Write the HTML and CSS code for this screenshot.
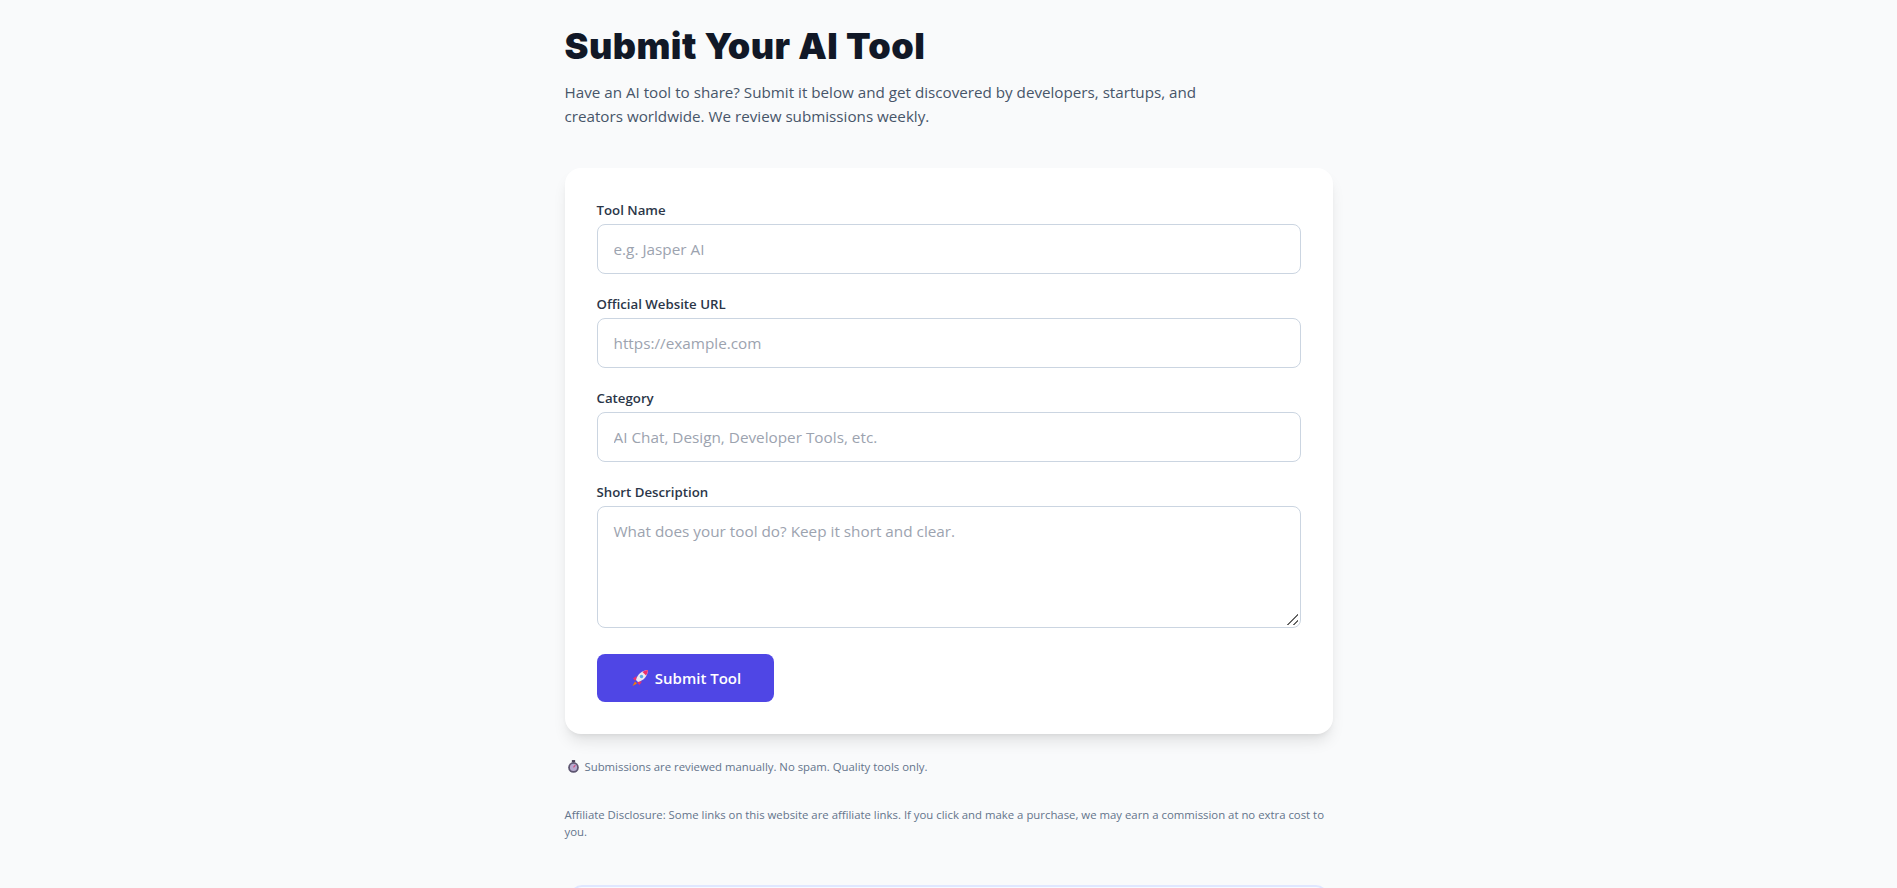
FILE: index.html
```html
<!DOCTYPE html>
<html lang="en">
<head>
<meta charset="utf-8">
<title>Submit Your AI Tool</title>
<link rel="stylesheet" href="styles.css">
</head>
<body>
<main class="page">
  <h1 class="title">Submit Your AI Tool</h1>
  <p class="lead">Have an AI tool to share? Submit it below and get discovered by developers, startups, and creators worldwide. We review submissions weekly.</p>
  <form class="card">
    <div class="field">
      <label class="label" for="name">Tool Name</label>
      <input class="input" id="name" type="text" placeholder="e.g. Jasper AI">
    </div>
    <div class="field">
      <label class="label" for="url">Official Website URL</label>
      <input class="input" id="url" type="text" placeholder="https://example.com">
    </div>
    <div class="field">
      <label class="label" for="cat">Category</label>
      <input class="input" id="cat" type="text" placeholder="AI Chat, Design, Developer Tools, etc.">
    </div>
    <div class="field">
      <label class="label" for="desc">Short Description</label>
      <textarea class="input area" id="desc" placeholder="What does your tool do? Keep it short and clear."></textarea>
    </div>
    <button class="submit" type="button">
      <svg class="rocket" viewBox="-2 -1 20 20" aria-hidden="true">
        <path d="M4 12.500L6 14.500 1.500 17z" fill="#f57c00"/>
        <path d="M5.500 7L2 9.500 4 11.500 5.500 11z" fill="#ec2f6d"/>
        <path d="M11 12.500L8.500 16 6.500 14 7 12.500z" fill="#ec2f6d"/>
        <path d="M17 1C11 1.500 6.500 5 5 11l2 2c6-1.500 9.500-6 10-12z" fill="#ece8f0"/>
        <path d="M17 1c-2 .2-4 .8-5.500 2l3.500 3.500C16.200 5 16.800 3 17 1z" fill="#ec2f6d"/>
        <circle cx="10.500" cy="7.500" r="1.700" fill="#5aa9e6"/>
      </svg>
      <span>Submit Tool</span>
    </button>
  </form>
  <p class="note">
    <svg class="watch" viewBox="0 0 12 14" aria-hidden="true">
      <rect x="4.200" y="0" width="3.600" height="2.400" fill="#4a4258"/>
      <circle cx="6" cy="8" r="5.800" fill="#5d5570"/>
      <circle cx="6" cy="8" r="3.900" fill="#b7a9cf"/>
      <path d="M6 8l2-2.400" stroke="#d9487a" stroke-width="1.200"/>
    </svg>
    <span>Submissions are reviewed manually. No spam. Quality tools only.</span>
  </p>
  <p class="disclosure">Affiliate Disclosure: Some links on this website are affiliate links. If you click and make a purchase, we may earn a commission at no extra cost to you.</p>
  <div class="next"></div>
</main>
</body>
</html>
```
FILE: styles.css
```css
* { box-sizing: border-box; }
html, body { margin: 0; padding: 0; }
body {
  background: #f9fafb;
  font-family: "Open Sans", "Noto Sans", sans-serif;
  color: #1f2937;
  height: 888px;
  overflow: hidden;
}
.page {
  width: 768px;
  margin: 0 auto;
  padding-top: 24px;
}
.title {
  margin: 0;
  height: 44px;
  font-family: Inter, sans-serif;
  font-size: 36px;
  line-height: 44px;
  font-weight: 900;
  letter-spacing: .45px;
  color: #111827;
}
.lead {
  margin: 12px 0 0;
  width: 672px;
  font-size: 15.2px;
  line-height: 24px;
  color: #475569;
}
.card {
  margin-top: 40px;
  padding: 32px;
  background: #fff;
  border-radius: 16px;
  box-shadow: 0 10px 15px -3px rgba(0,0,0,.1), 0 4px 6px -4px rgba(0,0,0,.1);
}
.field { margin-bottom: 20px; }
.label {
  display: block;
  height: 24px;
  font-size: 13.25px;
  line-height: 20px;
  font-weight: 600;
  color: #2b3648;
}
.input {
  display: block;
  width: 100%;
  height: 50px;
  padding: 0 16px;
  border: 1px solid #cbd5e1;
  border-radius: 8px;
  background: #fff;
  font: 15.3px "Open Sans", sans-serif;
  color: #1f2937;
  outline: none;
}
.input::placeholder { color: #9ca3af; opacity: 1; }
.area {
  height: 122px;
  padding: 14px 16px;
  resize: vertical;
}
.area::-webkit-resizer {
  background:
    linear-gradient(135deg, transparent 46%, #666 46%, #666 55%, transparent 55%, transparent 76%, #666 76%, #666 85%, transparent 85%) 2px 2px / 11px 11px no-repeat;
}
.submit {
  display: flex;
  align-items: center;
  justify-content: center;
  gap: 6px;
  width: 177px;
  height: 48px;
  margin-top: 26px;
  border: 0;
  border-radius: 8px;
  background: #4f46e5;
  color: #fff;
  font: 600 15px "Open Sans", sans-serif;
}
.rocket { width: 20px; height: 20px; }
.note {
  display: flex;
  align-items: center;
  gap: 6px;
  margin: 23px 0 0;
  height: 18px;
  font-size: 11.35px;
  color: #64748b;
}
.watch { width: 11px; height: 13px; margin-left: 3px; }
.disclosure {
  margin: 31px 0 0;
  font-size: 11.37px;
  line-height: 17px;
  color: #64748b;
}
.next {
  margin: 45px 5px 0;
  height: 80px;
  border: 2px solid #e0e7ff;
  border-radius: 12px;
  background: #f8faff;
}
```
